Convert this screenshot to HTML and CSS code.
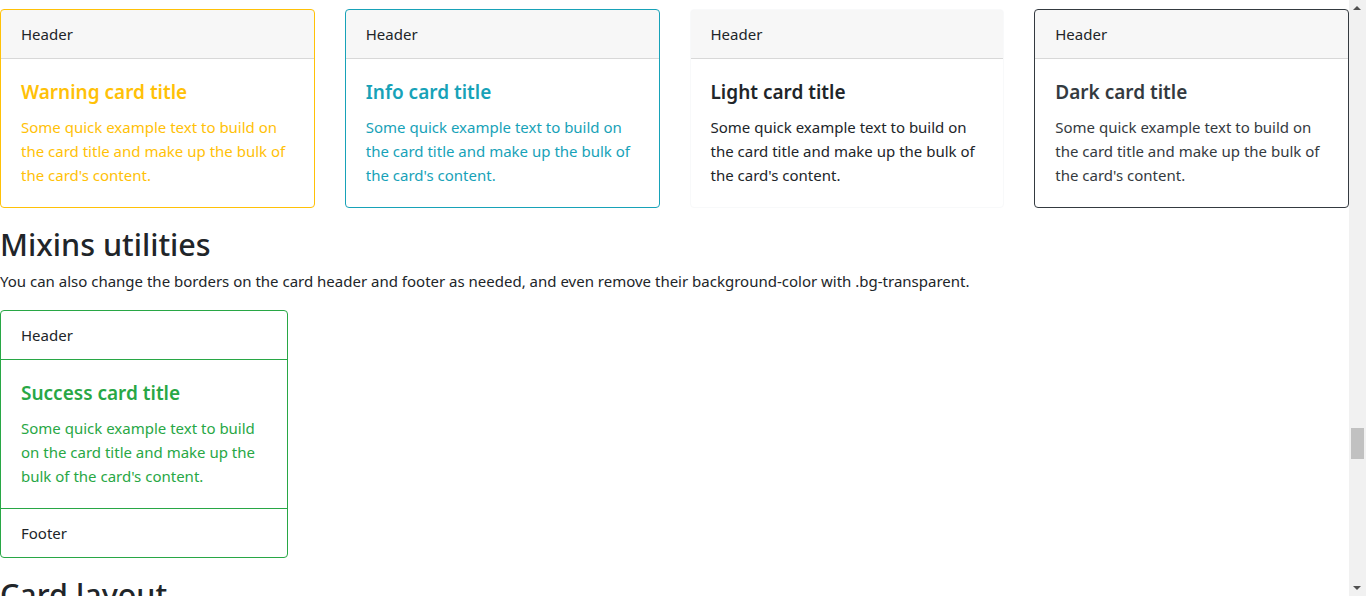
FILE: index.html
```html
<!DOCTYPE html>
<html lang="en">
<head>
<meta charset="utf-8">
<title>Cards</title>
<link rel="stylesheet" href="styles.css">
</head>
<body>
<div class="page">
  <div class="card-row">
    <div class="card card-warning">
      <div class="card-header">Header</div>
      <div class="card-body">
        <h5 class="card-title">Warning card title</h5>
        <p class="card-text">Some quick example text to build on the card title and make up the bulk of the card's content.</p>
      </div>
    </div>
    <div class="card card-info">
      <div class="card-header">Header</div>
      <div class="card-body">
        <h5 class="card-title">Info card title</h5>
        <p class="card-text">Some quick example text to build on the card title and make up the bulk of the card's content.</p>
      </div>
    </div>
    <div class="card card-light">
      <div class="card-header">Header</div>
      <div class="card-body">
        <h5 class="card-title">Light card title</h5>
        <p class="card-text">Some quick example text to build on the card title and make up the bulk of the card's content.</p>
      </div>
    </div>
    <div class="card card-dark">
      <div class="card-header">Header</div>
      <div class="card-body">
        <h5 class="card-title">Dark card title</h5>
        <p class="card-text">Some quick example text to build on the card title and make up the bulk of the card's content.</p>
      </div>
    </div>
  </div>

  <h2 class="section-title">Mixins utilities</h2>
  <p class="section-text">You can also change the borders on the card header and footer as needed, and even remove their background-color with .bg-transparent.</p>

  <div class="card card-success card-narrow">
    <div class="card-header card-header-clear">Header</div>
    <div class="card-body">
      <h5 class="card-title">Success card title</h5>
      <p class="card-text">Some quick example text to build on the card title and make up the bulk of the card's content.</p>
    </div>
    <div class="card-footer">Footer</div>
  </div>

  <h2 class="section-title">Card layout</h2>
</div>

<div class="scrollbar" aria-hidden="true">
  <div class="sb-arrow sb-up"></div>
  <div class="sb-track"><div class="sb-thumb"></div></div>
  <div class="sb-arrow sb-down"></div>
</div>
</body>
</html>
```

FILE: styles.css
```css
*, *::before, *::after {
  box-sizing: border-box;
}
html, body {
  margin: 0;
  padding: 0;
  overflow: hidden;
  background: #fff;
}
body {
  font-family: "Noto Sans", "Open Sans", sans-serif;
  font-size: 15px;
  line-height: 24px;
  color: #212529;
}
.page {
  width: 1349px;
  padding-top: 9px;
}
.card-row {
  display: flex;
  gap: 30px;
}
.card {
  flex: 1 1 0;
  min-width: 0;
  border: 1px solid rgba(0,0,0,.125);
  border-radius: 4px;
  background: #fff;
  display: flex;
  flex-direction: column;
}
.card-header {
  height: 49px;
  padding: 12px 20px;
  background: rgba(0,0,0,.03);
  border-bottom: 1px solid rgba(0,0,0,.125);
  border-radius: 3px 3px 0 0;
}
.card-body {
  padding: 20px;
}
.card-title {
  margin: 0 0 11px;
  padding-top: 1px;
  font-size: 19px;
  line-height: 24px;
  height: 25px;
  font-weight: 600;
}
.card-text {
  margin: 0;
}
.card-footer {
  height: 49px;
  padding: 12px 20px;
  border-top: 1px solid rgba(0,0,0,.125);
}

.card-warning { border-color: #ffc107; color: #ffc107; }
.card-info { border-color: #17a2b8; color: #17a2b8; }
.card-light { border-color: #f8f9fa; }
.card-dark { border-color: #343a40; color: #343a40; }
.card-warning .card-header,
.card-info .card-header,
.card-dark .card-header { color: #212529; }

.card-narrow { width: 288px; flex: none; }
.card-success { border-color: #28a745; }
.card-success .card-body { color: #28a745; }
.card-header-clear {
  background: transparent;
  border-bottom-color: #28a745;
}
.card-success .card-footer {
  border-top-color: #28a745;
}

.section-title {
  margin: 17px 0 6px;
  font-size: 30.5px;
  line-height: 38px;
  height: 38px;
  font-weight: 500;
}
.section-text {
  margin: 0 0 17px;
}

.scrollbar {
  position: fixed;
  top: 0;
  right: 0;
  width: 17px;
  height: 100%;
  background: #f1f1f1;
  display: flex;
  flex-direction: column;
}
.sb-arrow {
  height: 17px;
  flex: none;
  position: relative;
}
.sb-arrow::after {
  content: "";
  position: absolute;
  left: 4px;
  width: 0;
  height: 0;
  border-left: 4px solid transparent;
  border-right: 4px solid transparent;
}
.sb-up::after {
  top: 6px;
  border-bottom: 4px solid #505050;
}
.sb-down::after {
  top: 7px;
  border-top: 4px solid #505050;
}
.sb-track {
  flex: 1;
  position: relative;
}
.sb-thumb {
  position: absolute;
  left: 2px;
  right: 2px;
  top: 411px;
  height: 31px;
  background: #c1c1c1;
}
```
